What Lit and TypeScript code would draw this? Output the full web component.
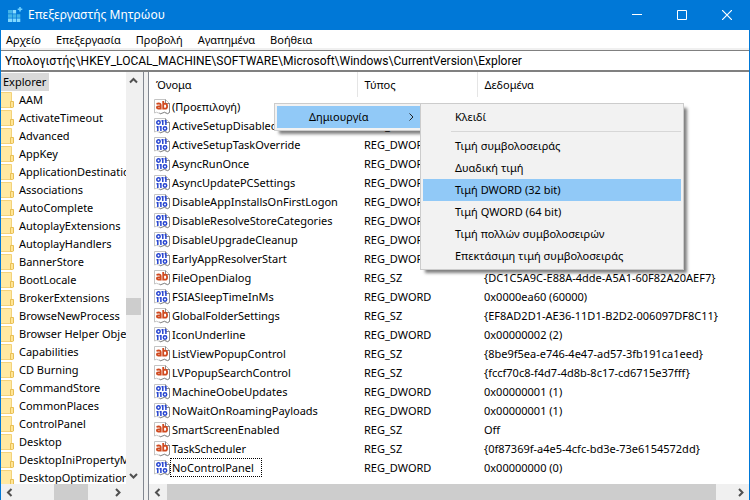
import { LitElement, html, css, svg } from "lit";
import { customElement } from "lit/decorators.js";
import { classMap } from "lit/directives/class-map.js";

const MENU = ["Αρχείο", "Επεξεργασία", "Προβολή", "Αγαπημένα", "Βοήθεια"];
const ADDRESS = "Υπολογιστής\\HKEY_LOCAL_MACHINE\\SOFTWARE\\Microsoft\\Windows\\CurrentVersion\\Explorer";

const KEYS = [
  "AAM", "ActivateTimeout", "Advanced", "AppKey", "ApplicationDestinations", "Associations",
  "AutoComplete", "AutoplayExtensions", "AutoplayHandlers", "BannerStore", "BootLocale",
  "BrokerExtensions", "BrowseNewProcess", "Browser Helper Objects", "Capabilities", "CD Burning",
  "CommandStore", "CommonPlaces", "ControlPanel", "Desktop", "DesktopIniPropertyMap",
  "DesktopOptimization",
];

type Kind = "REG_SZ" | "REG_DWORD";
const VALUES: [string, Kind, string][] = [
  ["(Προεπιλογή)", "REG_SZ", "(δεν έχει οριστεί τιμή)"],
  ["ActiveSetupDisabled", "REG_DWORD", "0x00000000 (0)"],
  ["ActiveSetupTaskOverride", "REG_DWORD", "0x00000001 (1)"],
  ["AsyncRunOnce", "REG_DWORD", "0x00000001 (1)"],
  ["AsyncUpdatePCSettings", "REG_DWORD", "0x00000001 (1)"],
  ["DisableAppInstallsOnFirstLogon", "REG_DWORD", "0x00000001 (1)"],
  ["DisableResolveStoreCategories", "REG_DWORD", "0x00000001 (1)"],
  ["DisableUpgradeCleanup", "REG_DWORD", "0x00000001 (1)"],
  ["EarlyAppResolverStart", "REG_DWORD", "0x00000001 (1)"],
  ["FileOpenDialog", "REG_SZ", "{DC1C5A9C-E88A-4dde-A5A1-60F82A20AEF7}"],
  ["FSIASleepTimeInMs", "REG_DWORD", "0x0000ea60 (60000)"],
  ["GlobalFolderSettings", "REG_SZ", "{EF8AD2D1-AE36-11D1-B2D2-006097DF8C11}"],
  ["IconUnderline", "REG_DWORD", "0x00000002 (2)"],
  ["ListViewPopupControl", "REG_SZ", "{8be9f5ea-e746-4e47-ad57-3fb191ca1eed}"],
  ["LVPopupSearchControl", "REG_SZ", "{fccf70c8-f4d7-4d8b-8c17-cd6715e37fff}"],
  ["MachineOobeUpdates", "REG_DWORD", "0x00000001 (1)"],
  ["NoWaitOnRoamingPayloads", "REG_DWORD", "0x00000001 (1)"],
  ["SmartScreenEnabled", "REG_SZ", "Off"],
  ["TaskScheduler", "REG_SZ", "{0f87369f-a4e5-4cfc-bd3e-73e6154572dd}"],
  ["NoControlPanel", "REG_DWORD", "0x00000000 (0)"],
];

const NEW_ITEMS = [
  "Κλειδί", "-", "Τιμή συμβολοσειράς", "Δυαδική τιμή", "Τιμή DWORD (32 bit)",
  "Τιμή QWORD (64 bit)", "Τιμή πολλών συμβολοσειρών", "Επεκτάσιμη τιμή συμβολοσειράς",
];
const ACTIVE_ITEM = "Τιμή DWORD (32 bit)";

const page = svg`
  <path d="M.5 .5h11l4 4v9q-2 2-3.500 .5t-3.500 0-4 0-4 0z" fill="#fff" stroke="#c4c4c4"/>
  <path d="M11.500 .5v4h4M15.500 4v9.500q-2 2-3.500 .5t-3.500 0-3 0" fill="none" stroke="#8c8c8c"/>`;

const stringIcon = html`<svg class="value-icon" width="16" height="16" viewBox="0 0 16 16" aria-hidden="true">
  ${page}
  <g fill="none" stroke="#d04a20" stroke-width="1.800">
    <path d="M2.500 4.800q4.200-1 4.200 1.200v4.500M6.500 7.300h-1.700q-1.900 0-1.900 1.200t1.500 1.200q1.600 0 2.300-1"/>
    <path d="M9.200 2v8.500M9.200 5.600q.8-.9 1.900-.9 2 0 2 2.500t-2 2.500q-1.100 0-1.900-.9"/>
  </g>
</svg>`;

const binaryIcon = html`<svg class="value-icon" width="16" height="16" viewBox="0 0 16 16" aria-hidden="true">
  ${page}
  <g fill="none" stroke="#2644d0" stroke-width="1.500">
    <ellipse cx="4.500" cy="4.500" rx="1.700" ry="1.700"/>
    <path d="M8.800 2v5M7.500 2.800h1.300M11.900 2v5M10.600 2.800h1.300"/>
    <path d="M3.800 8v5M2.500 8.800h1.300M6.900 8v5M5.600 8.800h1.300"/>
    <ellipse cx="11" cy="10.500" rx="1.700" ry="1.700"/>
  </g>
</svg>`;

const folderIcon = html`<svg class="folder" width="13" height="16" viewBox="0 0 13 16" aria-hidden="true">
  <path d="M0 .5h10.500v15H0z" fill="#ffe9a2"/>
  <path d="M0 .5h10.500v15H0" fill="none" stroke="#f3d27a"/>
  <path d="M9.500 9.500h3v5.500l-1 .500h-2z" fill="#ffe595" stroke="#e8bf55"/>
</svg>`;

const chevron = (dir: "up" | "down" | "left" | "right") => {
  const d = {
    up: "M2 7.500 5.500 4 9 7.500", down: "M2 4 5.500 7.500 9 4",
    left: "M7.500 2 4 5.500 7.500 9", right: "M4 2 7.500 5.500 4 9",
  }[dir];
  return html`<svg width="11" height="11" viewBox="0 0 11 11" aria-hidden="true">
    <path d=${d} fill="none" stroke="#505050" stroke-width="2"/></svg>`;
};

@customElement("app-root")
export class AppRoot extends LitElement {
  static styles = css`
    :host {
      display: flex;
      flex-direction: column;
      height: 100vh;
      overflow: hidden;
      box-sizing: border-box;
      border: solid #0078d7;
      border-width: 0 1px;
      background: #fff;
      color: #000;
      font: 11px/18px "Noto Sans", "Open Sans", sans-serif;
      cursor: default;
    }
    * { box-sizing: border-box; }
    button, input {
      font: inherit;
      color: inherit;
      border: 0;
      padding: 0;
      margin: 0;
      background: none;
      border-radius: 0;
      outline: 0;
    }
    svg { display: block; flex: none; }

    .titlebar {
      display: flex;
      align-items: center;
      flex: none;
      height: 30px;
      padding-left: 6px;
      background: #0078d7;
      color: #fff;
    }
    .title { flex: 1; margin: 0 0 0 5px; font-size: 12px; font-weight: 400; }
    .caption { display: grid; place-items: center; width: 45px; height: 30px; }

    .menubar {
      display: flex;
      flex: none;
      gap: 15px;
      height: 20px;
      padding: 1px 5px 0;
      border-bottom: 2px solid #f0f0f0;
    }
    .address {
      flex: none;
      width: 100%;
      height: 22px;
      padding: 0 4px;
      border: solid #808080;
      border-width: 1px 0 2px;
      font-family: Roboto, "Noto Sans", sans-serif;
      font-size: 12px;
    }
    .panes { display: flex; flex: 1; min-height: 0; }

    .tree-pane {
      display: grid;
      grid-template: minmax(0, 1fr) 16px / minmax(0, 1fr) 17px;
      flex: none;
      width: 143px;
      border-right: 1px solid #828790;
    }
    .tree { margin: 0; padding: 1px 0 0; overflow: hidden; list-style: none; }
    .tree li { display: flex; align-items: center; gap: 5px; height: 18px; white-space: nowrap; }
    .tree .root { width: 48px; padding-left: 2px; background: #d9d9d9; }

    .splitter { flex: none; width: 5px; background: #f0f0f0; border-right: 1px solid #828790; }
    .bar { display: flex; align-items: center; background: #f0f0f0; }
    .bar.vertical { flex-direction: column; padding: 3px 2px 3px 0; }
    .bar.wide { height: 16px; flex: none; padding: 0 3px; }
    .bar.tree-bar { grid-column: 1 / -1; padding: 0 20px 0 3px; }
    .track { flex: 1; display: flex; min-height: 0; align-self: stretch; }
    .vertical .track { flex-direction: column; }
    .thumb { background: #cdcdcd; }
    .before-v { flex: 212; }
    .thumb-v { flex: 17; width: 15px; }
    .after-v { flex: 155; }
    .before-h { flex: 39; }
    .thumb-h { flex: 34; }
    .after-h { flex: 24; }
    .thumb-list { flex: 548; margin-left: 4px; }
    .after-list { flex: 19; }

    .list-pane { display: flex; flex-direction: column; flex: 1; min-width: 0; }
    .list { flex: 1; min-height: 0; overflow: hidden; }
    table { width: 100%; border-collapse: collapse; table-layout: fixed; }
    th, td { padding: 0 0 0 7px; text-align: left; font-weight: 400; white-space: nowrap; }
    th { height: 25px; padding-top: 1px; border-right: 1px solid #e5e5e5; }
    th:last-child { border-right: 0; }
    .name-col { width: 208px; }
    .type-col { width: 120px; }
    td { height: 19px; }
    td:first-child { padding-left: 5px; }
    .name { display: flex; align-items: center; }
    .label { height: 19px; padding: 0 7px 0 1px; border: 1px solid transparent; line-height: 17px; }
    .label.focused { border: 1px dotted #000; }

    .popup {
      position: absolute;
      background: #f2f2f2;
      border: 1px solid #ccc;
      padding: 2px;
      box-shadow: 4px 4px 3px -1px rgba(0, 0, 0, 0.5);
    }
    .context { left: 274px; top: 103px; width: 149px; }
    .submenu { left: 420px; top: 103px; width: 264px; }
    .item {
      display: flex;
      align-items: center;
      width: 100%;
      height: 22px;
      padding: 0 6px 0 32px;
      text-align: left;
      white-space: nowrap;
    }
    .item.active { background: #91c9f7; }
    .item span { flex: 1; }
    .popup hr { height: 1px; margin: 3px 0 3px 28px; border: 0; background: #d7d7d7; }
  `;

  private titlebar() {
    return html`<header class="titlebar">
      <svg width="16" height="16" viewBox="0 0 16 16" aria-hidden="true">
        <path d="M1 3h4v3.500h-4zM1 7.300h4v3.500h-4zM5.600 7.300h3.500v3.500h-3.500zM9.800 7.300h3.500v3.500h-3.500z" fill="#45b4e8"/>
        <path d="M5.600 3h3.500v3.500h-3.500z" fill="#8bdcff"/>
        <path d="M1 11.500h4v3.500h-4zM5.600 11.500h3.500v3.500h-3.500zM9.800 11.500h3.500v3.500h-3.500z" fill="#7fd8ff"/>
        <path d="M13 0v4.500M10.700 2.300h4.600" stroke="#6fd0ff" stroke-width="1.600"/>
      </svg>
      <h1 class="title">Επεξεργαστής Μητρώου</h1>
      <button class="caption" aria-label="Ελαχιστοποίηση"><svg width="10" height="10"><path d="M0 4.500h10" stroke="#fff"/></svg></button>
      <button class="caption" aria-label="Μεγιστοποίηση"><svg width="10" height="10"><path d="M.5 .5h9v9h-9z" fill="none" stroke="#fff"/></svg></button>
      <button class="caption" aria-label="Κλείσιμο"><svg width="10" height="10"><path d="M0 0l10 10M10 0 0 10" stroke="#fff" stroke-width="1.200"/></svg></button>
    </header>`;
  }

  private treePane() {
    return html`<section class="tree-pane">
      <ul class="tree">
        <li class="root">Explorer</li>
        ${KEYS.map((k) => html`<li>${folderIcon}<span>${k}</span></li>`)}
      </ul>
      <div class="bar vertical">${chevron("up")}
        <div class="track"><div class="before-v"></div><div class="thumb thumb-v"></div><div class="after-v"></div></div>
        ${chevron("down")}</div>
      <div class="bar wide tree-bar">${chevron("left")}
        <div class="track"><div class="before-h"></div><div class="thumb thumb-h"></div><div class="after-h"></div></div>
        ${chevron("right")}</div>
    </section>`;
  }

  private listPane() {
    return html`<section class="list-pane">
      <div class="list"><table>
        <colgroup><col class="name-col"><col class="type-col"><col></colgroup>
        <thead><tr><th>Όνομα</th><th>Τύπος</th><th>Δεδομένα</th></tr></thead>
        <tbody>${VALUES.map(([name, kind, data]) => html`<tr>
          <td><div class="name">${kind === "REG_SZ" ? stringIcon : binaryIcon}
            <span class=${classMap({ label: true, focused: name === "NoControlPanel" })}>${name}</span></div></td>
          <td>${kind}</td><td>${data}</td></tr>`)}</tbody>
      </table></div>
      <div class="bar wide">${chevron("left")}
        <div class="track"><div class="thumb thumb-list"></div><div class="after-list"></div></div>
        ${chevron("right")}</div>
    </section>`;
  }

  private menus() {
    return html`
      <div class="popup context" role="menu">
        <button class="item active" role="menuitem"><span>Δημιουργία</span>
          <svg width="5" height="8"><path d="M.5 .5 4 4 .5 7.500" fill="none" stroke="#222"/></svg></button>
      </div>
      <div class="popup submenu" role="menu">
        ${NEW_ITEMS.map((t) => t === "-" ? html`<hr>` : html`<button
          class=${classMap({ item: true, active: t === ACTIVE_ITEM })} role="menuitem">${t}</button>`)}
      </div>`;
  }

  render() {
    return html`
      ${this.titlebar()}
      <nav class="menubar">${MENU.map((m) => html`<button>${m}</button>`)}</nav>
      <input class="address" aria-label="Διεύθυνση" .value=${ADDRESS}>
      <main class="panes">${this.treePane()}<div class="splitter"></div>${this.listPane()}</main>
      ${this.menus()}`;
  }
}
